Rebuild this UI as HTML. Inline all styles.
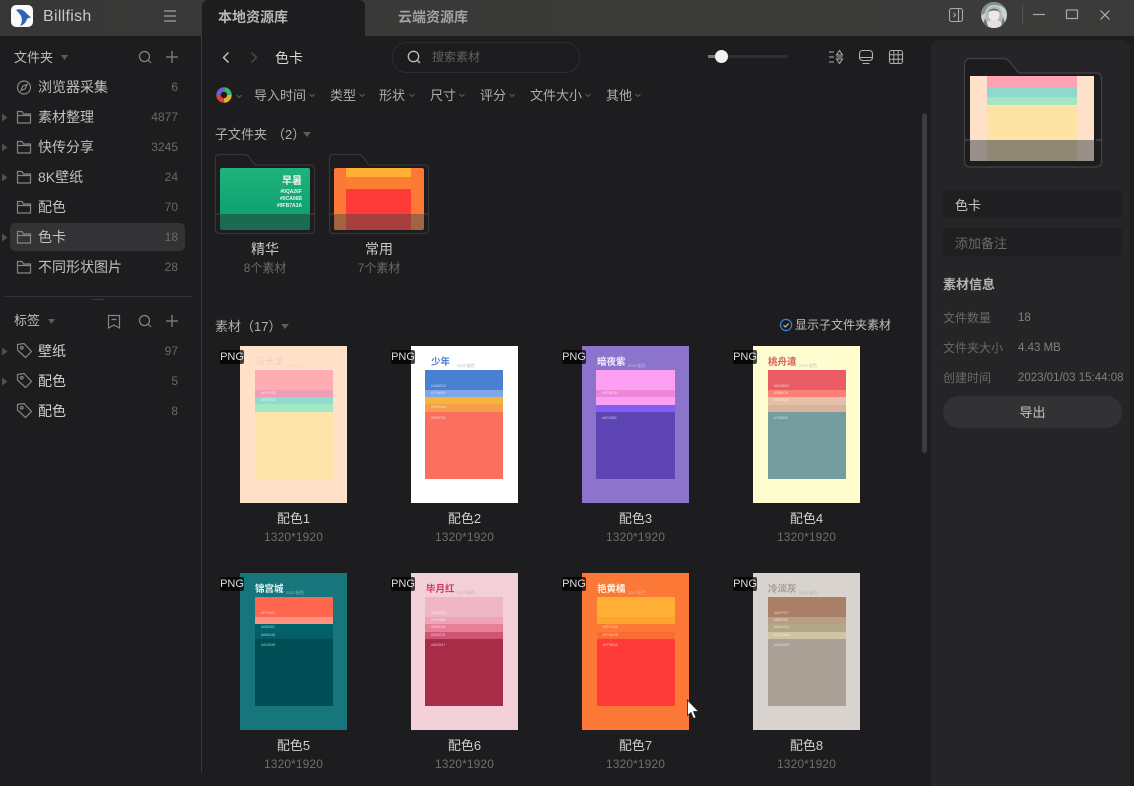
<!DOCTYPE html>
<html lang="zh"><head><meta charset="utf-8"><title>Billfish</title>
<style>
html,body{margin:0;padding:0;background:#1d1c1f}
#a{position:relative;width:1134px;height:786px;overflow:hidden;background:#1d1c1f;font-family:"Liberation Sans","Noto Sans CJK SC",sans-serif;color:#ccc}
#a div,#a svg,#a span{position:absolute}
.t{white-space:nowrap;line-height:20px;height:20px}
.n{font-size:14px;color:#c0c0c0;left:38px}
.k{font-size:12px;color:#6a6a6a;right:956px;text-align:right}
.f{font-size:13px;color:#aeaeae;top:86px}
.ic{fill:none;stroke:#858585;stroke-width:1.2}
.c{width:107px;height:157px;overflow:hidden}
.i{left:15px;top:24px;width:78px;height:109px}
.i div{left:0;width:100%;overflow:hidden}
.h{left:15px;top:10px;font-size:9.5px;font-weight:bold;line-height:14px;white-space:nowrap}
.m{left:46px;top:17px;font-size:4px;line-height:6px;white-space:nowrap;opacity:.6}
.x{font-size:3.5px;line-height:4px;color:#fff;left:6px;white-space:nowrap;opacity:.65}
.l{width:107px;text-align:center;font-size:13px;color:#d0d0d0;line-height:20px;margin-top:1px}
.d{width:107px;text-align:center;font-size:12px;color:#6e6e6e;line-height:18px;letter-spacing:.1px}
.b{width:24px;height:14px;margin-left:1px;background:rgba(0,0,0,.72);color:#ddd;font-size:11px;line-height:14px;text-align:center;border-radius:2px}
</style></head><body><div id="a">

<!-- title bar -->
<div style="left:0;top:0;width:1134px;height:36px;background:linear-gradient(90deg,#373737,#3a3a39 60%,#3b3c3a)"></div>
<div style="left:11px;top:5px;width:22px;height:22px;background:#fafafa;border-radius:5px"></div>
<svg style="left:11px;top:5px" width="22" height="22" viewBox="0 0 22 22"><path d="M5 5C9 3 13 5 16 9C17 10 19 11 20 13C18 12.500 17 13 16 14C15 17 13 20 9 21C11 18 11.500 14 10 11C9 9 7 7 5 5Z" fill="#2f63b8"/></svg>
<div class="t" style="left:43px;top:7px;font-size:16px;color:#c8c8c8;letter-spacing:.3px">Billfish</div>
<svg style="left:163px;top:9px" width="14" height="14" viewBox="0 0 14 14"><path d="M1 2H13M1 7H13M1 12H13" stroke="#a0a0a0" stroke-width="1.3" fill="none"/></svg>
<div style="left:202px;top:0;width:163px;height:36px;background:#1d1c1f;border-radius:6px 6px 0 0"></div>
<div class="t" style="left:218px;top:7px;font-size:14px;font-weight:bold;color:#b6b6b6">本地资源库</div>
<div class="t" style="left:398px;top:7px;font-size:14px;font-weight:bold;color:#a2a2a2">云端资源库</div>
<svg style="left:948px;top:7px" width="16" height="16" viewBox="0 0 16 16"><rect x="1.500" y="1.500" width="13" height="13" rx="2" fill="none" stroke="#a8a8a8" stroke-width="1.100"/><path d="M10.500 1.500V14.500M5.500 6L7.500 8L5.500 10" fill="none" stroke="#a8a8a8" stroke-width="1.100"/></svg>
<svg style="left:981px;top:2px" width="26" height="26" viewBox="0 0 26 26"><defs><clipPath id="av"><circle cx="13" cy="13" r="13"/></clipPath></defs><g clip-path="url(#av)"><rect width="26" height="26" fill="#cfcfcf"/><path d="M0 0H26V9C22 4 18 3 13 3C8 3 5 6 4 11L0 14Z" fill="#7f8f92"/><path d="M5 12C5 6 10 4 14 4C19 4 21 8 21 13L24 26H2Z" fill="#aebcbe"/><ellipse cx="13" cy="13" rx="5.500" ry="6" fill="#efe7e2"/><path d="M7 10C9 6 16 5 19 10C16 8 10 8 7 10Z" fill="#5c6a6f"/><path d="M3 26C4 20 8 18 13 18C18 18 22 20 23 26Z" fill="#e4e0de"/><path d="M4 16L7 24L2 24ZM22 15L25 24L20 24Z" fill="#647478"/></g></svg>
<div style="left:1022px;top:5px;width:1px;height:20px;background:#555"></div>
<svg style="left:1032px;top:7px" width="14" height="14" viewBox="0 0 14 14"><path d="M1 7.500H13" stroke="#a8a8a8" stroke-width="1.200"/></svg>
<svg style="left:1065px;top:7px" width="14" height="14" viewBox="0 0 14 14"><rect x="1.500" y="3" width="11" height="8.500" fill="none" stroke="#a8a8a8" stroke-width="1.200"/></svg>
<svg style="left:1098px;top:8px" width="14" height="14" viewBox="0 0 14 14"><path d="M2.500 2.500L11.500 11.500M11.500 2.500L2.500 11.500" stroke="#b0b0b0" stroke-width="1.200"/></svg>

<!-- sidebar -->
<div class="t" style="left:14px;top:48px;font-size:13px;color:#bcbcbc">文件夹</div>
<svg style="left:60px;top:54px" width="9" height="7"><path d="M1 1H8L4.500 6Z" fill="#5e5e5e"/></svg>
<svg style="left:138px;top:50px" width="15" height="15" viewBox="0 0 15 15"><circle cx="6.500" cy="6.500" r="5" class="ic"/><path d="M10 10L13 13" class="ic"/></svg>
<svg style="left:165px;top:50px" width="14" height="14" viewBox="0 0 14 14"><path d="M7 1V13M1 7H13" stroke="#7a7a7a" stroke-width="1.400"/></svg>

<div style="left:10px;top:223px;width:175px;height:28px;background:#333235;border-radius:5px"></div>

<svg style="left:16px;top:80px" width="16" height="15" viewBox="0 0 16 15"><circle cx="8" cy="7.500" r="6.500" class="ic"/><path d="M11 4.500L9.200 8.800L5 10.500L6.800 6.200Z" class="ic" stroke-width="1"/></svg>
<div class="t n" style="top:77px">浏览器采集</div><div class="t k" style="top:77px">6</div>

<svg style="left:1px;top:113px" width="7" height="9"><path d="M1 0.500L6.500 4.500L1 8.500Z" fill="#4f4f4f"/></svg>
<svg style="left:16px;top:109px" width="16" height="16" viewBox="0 0 16 16"><path d="M1.500 14V2.500H6L7.500 5H14.500V14ZM1.500 6.500H14.500" class="ic"/></svg>
<div class="t n" style="top:107px">素材整理</div><div class="t k" style="top:107px">4877</div>

<svg style="left:1px;top:143px" width="7" height="9"><path d="M1 0.500L6.500 4.500L1 8.500Z" fill="#4f4f4f"/></svg>
<svg style="left:16px;top:139px" width="16" height="16" viewBox="0 0 16 16"><path d="M1.500 14V2.500H6L7.500 5H14.500V14ZM1.500 6.500H14.500" class="ic"/></svg>
<div class="t n" style="top:137px">快传分享</div><div class="t k" style="top:137px">3245</div>

<svg style="left:1px;top:173px" width="7" height="9"><path d="M1 0.500L6.500 4.500L1 8.500Z" fill="#4f4f4f"/></svg>
<svg style="left:16px;top:169px" width="16" height="16" viewBox="0 0 16 16"><path d="M1.500 14V2.500H6L7.500 5H14.500V14ZM1.500 6.500H14.500" class="ic"/></svg>
<div class="t n" style="top:167px">8K壁纸</div><div class="t k" style="top:167px">24</div>

<svg style="left:16px;top:199px" width="16" height="16" viewBox="0 0 16 16"><path d="M1.500 14V2.500H6L7.500 5H14.500V14ZM1.500 6.500H14.500" class="ic"/></svg>
<div class="t n" style="top:197px">配色</div><div class="t k" style="top:197px">70</div>

<svg style="left:1px;top:233px" width="7" height="9"><path d="M1 0.500L6.500 4.500L1 8.500Z" fill="#4f4f4f"/></svg>
<svg style="left:16px;top:229px" width="16" height="16" viewBox="0 0 16 16"><path d="M1.500 14V2.500H6L7.500 5H14.500V14ZM1.500 6.500H14.500" class="ic"/></svg>
<div class="t n" style="top:227px">色卡</div><div class="t k" style="top:227px">18</div>

<svg style="left:16px;top:259px" width="16" height="16" viewBox="0 0 16 16"><path d="M1.500 14V2.500H6L7.500 5H14.500V14ZM1.500 6.500H14.500" class="ic"/></svg>
<div class="t n" style="top:257px">不同形状图片</div><div class="t k" style="top:257px">28</div>

<div style="left:4px;top:296px;width:188px;height:1px;background:#343336"></div>
<div style="left:92px;top:299px;width:12px;height:1px;background:#3a393c"></div>

<div class="t" style="left:14px;top:311px;font-size:13px;color:#bcbcbc">标签</div>
<svg style="left:47px;top:318px" width="9" height="7"><path d="M1 1H8L4.500 6Z" fill="#5e5e5e"/></svg>
<svg style="left:107px;top:314px" width="14" height="15" viewBox="0 0 14 15"><path d="M1.500 1.500H12.500V14L7 11L1.500 14ZM4.500 5.500H9.500" class="ic"/></svg>
<svg style="left:138px;top:314px" width="15" height="15" viewBox="0 0 15 15"><circle cx="6.500" cy="6.500" r="5" class="ic"/><path d="M10 10L13 13" class="ic"/></svg>
<svg style="left:165px;top:314px" width="14" height="14" viewBox="0 0 14 14"><path d="M7 1V13M1 7H13" stroke="#7a7a7a" stroke-width="1.400"/></svg>

<svg style="left:1px;top:347px" width="7" height="9"><path d="M1 0.500L6.500 4.500L1 8.500Z" fill="#4f4f4f"/></svg>
<svg style="left:16px;top:342px" width="17" height="17" viewBox="0 0 17 17"><path d="M1.500 2.500L8 1.500L15.500 9.500L9.500 15.500L1.500 8Z" class="ic"/><circle cx="5.800" cy="5.800" r="1.300" class="ic"/></svg>
<div class="t n" style="top:341px;color:#d0d0d0">壁纸</div><div class="t k" style="top:341px">97</div>

<svg style="left:1px;top:377px" width="7" height="9"><path d="M1 0.500L6.500 4.500L1 8.500Z" fill="#4f4f4f"/></svg>
<svg style="left:16px;top:372px" width="17" height="17" viewBox="0 0 17 17"><path d="M1.500 2.500L8 1.500L15.500 9.500L9.500 15.500L1.500 8Z" class="ic"/><circle cx="5.800" cy="5.800" r="1.300" class="ic"/></svg>
<div class="t n" style="top:371px;color:#d0d0d0">配色</div><div class="t k" style="top:371px">5</div>

<svg style="left:16px;top:402px" width="17" height="17" viewBox="0 0 17 17"><path d="M1.500 2.500L8 1.500L15.500 9.500L9.500 15.500L1.500 8Z" class="ic"/><circle cx="5.800" cy="5.800" r="1.300" class="ic"/></svg>
<div class="t n" style="top:401px;color:#d0d0d0">配色</div><div class="t k" style="top:401px">8</div>

<div style="left:201px;top:36px;width:1px;height:736px;background:#39383b"></div>

<!-- toolbar -->
<svg style="left:221px;top:51px" width="10" height="13" viewBox="0 0 10 13"><path d="M7.500 1.500L2.500 6.500L7.500 11.500" fill="none" stroke="#c8c8c8" stroke-width="1.400"/></svg>
<svg style="left:249px;top:51px" width="10" height="13" viewBox="0 0 10 13"><path d="M2.500 1.500L7.500 6.500L2.500 11.500" fill="none" stroke="#4c4c4c" stroke-width="1.400"/></svg>
<div class="t" style="left:275px;top:48px;font-size:14px;color:#d8d8d8">色卡</div>
<div style="left:392px;top:42px;width:186px;height:29px;border:1px solid #2d2c2f;border-radius:15px;background:#1c1b1e"></div>
<svg style="left:406px;top:49px" width="16" height="16" viewBox="0 0 16 16"><circle cx="7.500" cy="7.500" r="5.200" fill="none" stroke="#bdbdbd" stroke-width="1.300"/><path d="M11 11L14 14" stroke="#bdbdbd" stroke-width="1.300"/></svg>
<div class="t" style="left:432px;top:47px;font-size:12px;color:#636363">搜索素材</div>
<div style="left:708px;top:55px;width:80px;height:3px;background:#2f2e31;border-radius:2px"></div>
<div style="left:708px;top:55px;width:12px;height:3px;background:#777"></div>
<div style="left:715px;top:50px;width:13px;height:13px;background:#f1f1f1;border-radius:50%"></div>
<svg style="left:828px;top:49px" width="16" height="16" viewBox="0 0 16 16"><path d="M1 3H6M1 8H6M1 13H6M8.500 6L11.500 1.500L14.500 6ZM8.500 10L11.500 14.500L14.500 10ZM8.500 8H14.500" fill="none" stroke="#b0b0b0" stroke-width="1"/></svg>
<svg style="left:858px;top:49px" width="16" height="16" viewBox="0 0 16 16"><rect x="1.500" y="1.500" width="13" height="10" rx="3" fill="none" stroke="#b0b0b0" stroke-width="1.100"/><path d="M1.500 8.500H14.500M4.500 14.500H11.500" stroke="#b0b0b0" stroke-width="1.100"/></svg>
<svg style="left:888px;top:49px" width="16" height="16" viewBox="0 0 16 16"><rect x="1.500" y="1.500" width="13" height="13" rx="2" fill="none" stroke="#b0b0b0" stroke-width="1.100"/><path d="M5.800 1.500V14.500M10.200 1.500V14.500M1.500 5.800H14.500M1.500 10.200H14.500" stroke="#b0b0b0" stroke-width="1"/></svg>

<!-- filters -->
<svg style="left:215px;top:86px" width="18" height="18" viewBox="0 0 18 18" fill="none" stroke-width="4.500"><circle cx="9" cy="9" r="5.500" stroke="#3fb56c" stroke-dasharray="8.600 26" stroke-dashoffset="-26"/><circle cx="9" cy="9" r="5.500" stroke="#e8b02e" stroke-dasharray="8.600 26" stroke-dashoffset="0"/><circle cx="9" cy="9" r="5.500" stroke="#e0413c" stroke-dasharray="8.600 26" stroke-dashoffset="-8.600"/><circle cx="9" cy="9" r="5.500" stroke="#7a5bd0" stroke-dasharray="8.700 26" stroke-dashoffset="-17.300"/></svg>
<svg style="left:235px;top:94px" width="8" height="6"><path d="M1.500 1L4 3.500L6.500 1" fill="none" stroke="#5a5a5a" stroke-width="1.100"/></svg>
<div class="t f" style="left:254px">导入时间</div><svg style="left:308px;top:93px" width="8" height="6"><path d="M1.500 1L4 3.500L6.500 1" fill="none" stroke="#5a5a5a" stroke-width="1.100"/></svg>
<div class="t f" style="left:330px">类型</div><svg style="left:358px;top:93px" width="8" height="6"><path d="M1.500 1L4 3.500L6.500 1" fill="none" stroke="#5a5a5a" stroke-width="1.100"/></svg>
<div class="t f" style="left:379px">形状</div><svg style="left:408px;top:93px" width="8" height="6"><path d="M1.500 1L4 3.500L6.500 1" fill="none" stroke="#5a5a5a" stroke-width="1.100"/></svg>
<div class="t f" style="left:430px">尺寸</div><svg style="left:458px;top:93px" width="8" height="6"><path d="M1.500 1L4 3.500L6.500 1" fill="none" stroke="#5a5a5a" stroke-width="1.100"/></svg>
<div class="t f" style="left:480px">评分</div><svg style="left:508px;top:93px" width="8" height="6"><path d="M1.500 1L4 3.500L6.500 1" fill="none" stroke="#5a5a5a" stroke-width="1.100"/></svg>
<div class="t f" style="left:530px">文件大小</div><svg style="left:584px;top:93px" width="8" height="6"><path d="M1.500 1L4 3.500L6.500 1" fill="none" stroke="#5a5a5a" stroke-width="1.100"/></svg>
<div class="t f" style="left:606px">其他</div><svg style="left:634px;top:93px" width="8" height="6"><path d="M1.500 1L4 3.500L6.500 1" fill="none" stroke="#5a5a5a" stroke-width="1.100"/></svg>

<!-- subfolders -->
<div class="t" style="left:215px;top:125px;font-size:13px;color:#b0b0b0">子文件夹</div>
<div class="t" style="left:272px;top:125px;font-size:13px;color:#b0b0b0">（2）</div>
<svg style="left:302px;top:131px" width="10" height="7"><path d="M1 1H9L5 6Z" fill="#5e5e5e"/></svg>

<div style="left:220px;top:168px;width:90px;height:46px;background:linear-gradient(180deg,#1fb27c,#0fa270);border-radius:2px 2px 0 0"></div>
<div style="left:220px;top:214px;width:90px;height:16px;background:#1c6a52;border-radius:0 0 2px 2px"></div>
<div class="t" style="left:282px;top:172px;width:20px;text-align:right;font-size:10px;font-weight:bold;color:#f2f2f2">早暑</div>
<div class="t" style="left:272px;top:182px;width:30px;text-align:right;font-size:5px;font-weight:bold;color:#e8f5ee">#0QA26F</div>
<div class="t" style="left:272px;top:189px;width:30px;text-align:right;font-size:5px;font-weight:bold;color:#e8f5ee">#0CA06B</div>
<div class="t" style="left:272px;top:196px;width:30px;text-align:right;font-size:5px;font-weight:bold;color:#e8f5ee">#9FB7A3A</div>
<svg style="left:214px;top:153px" width="102" height="82" viewBox="0 0 102 82"><path d="M1.500 77V5.500Q1.500 1.500 5.500 1.500H30Q33 1.500 35 4L41 12H96Q100.500 12 100.500 16V77Q100.500 80.500 96 80.500H6Q1.500 80.500 1.500 77Z" fill="none" stroke="#363538" stroke-width="1.200"/><path d="M1.500 61H6M96 61H100.500" stroke="#444" stroke-width="1"/></svg>
<div class="t" style="left:215px;top:239px;width:100px;text-align:center;font-size:14px;color:#c8c8c8">精华</div>
<div class="t" style="left:215px;top:258px;width:100px;text-align:center;font-size:12px;color:#6a6a6a">8个素材</div>

<div style="left:334px;top:168px;width:90px;height:46px;background:#fb7836;border-radius:2px 2px 0 0"></div>
<div style="left:346px;top:168px;width:65px;height:9px;background:#ffb035"></div>
<div style="left:346px;top:177px;width:65px;height:12px;background:#fc7e33"></div>
<div style="left:346px;top:189px;width:65px;height:25px;background:#ff3b3a"></div>
<div style="left:334px;top:214px;width:90px;height:16px;background:#a0643f;border-radius:0 0 2px 2px"></div>
<div style="left:346px;top:214px;width:65px;height:16px;background:#a83f3f"></div>
<svg style="left:328px;top:153px" width="102" height="82" viewBox="0 0 102 82"><path d="M1.500 77V5.500Q1.500 1.500 5.500 1.500H30Q33 1.500 35 4L41 12H96Q100.500 12 100.500 16V77Q100.500 80.500 96 80.500H6Q1.500 80.500 1.500 77Z" fill="none" stroke="#363538" stroke-width="1.200"/><path d="M1.500 61H6M96 61H100.500" stroke="#444" stroke-width="1"/></svg>
<div class="t" style="left:329px;top:239px;width:100px;text-align:center;font-size:14px;color:#c8c8c8">常用</div>
<div class="t" style="left:329px;top:258px;width:100px;text-align:center;font-size:12px;color:#6a6a6a">7个素材</div>

<!-- assets header -->
<div class="t" style="left:215px;top:317px;font-size:13px;color:#b0b0b0">素材（17）</div>
<svg style="left:280px;top:323px" width="10" height="7"><path d="M1 1H9L5 6Z" fill="#5e5e5e"/></svg>
<svg style="left:779px;top:318px" width="14" height="14" viewBox="0 0 14 14"><circle cx="7" cy="7" r="5.600" fill="none" stroke="#3d7fd0" stroke-width="1.200"/><path d="M4.500 7.200L6.400 9L9.600 5.500" fill="none" stroke="#bcd0ea" stroke-width="1.100"/></svg>
<div class="t" style="left:795px;top:315px;font-size:12px;color:#c0c0c0">显示子文件夹素材</div>

<!-- card 1 -->
<div class="c" style="left:240px;top:346px;background:#ffe0c8"><div class="h" style="color:#f4cdbb;font-weight:normal">马卡龙</div><div class="m" style="color:#f2c6b4">2023 配色</div>
<div class="i"><div style="top:0;height:20px;background:#ffadb3"></div><div style="top:20px;height:7px;background:#ef9fb5"><span class="x" style="top:1px">#EF9FB5</span></div><div style="top:27px;height:7px;background:#8fdbd0"><span class="x" style="top:1px">#8FDBD0</span></div><div style="top:34px;height:8px;background:#a2e8c2"></div><div style="top:42px;height:67px;background:#fde4ab"></div></div></div>
<div class="b" style="left:219px;top:350px">PNG</div>
<div class="l" style="left:240px;top:508px">配色1</div><div class="d" style="left:240px;top:528px">1320*1920</div>

<!-- card 2 -->
<div class="c" style="left:411px;top:346px;background:#fff"><div class="h" style="color:#4a80d0;left:20px">少年</div><div class="m" style="color:#888">2023 配色</div>
<div class="i" style="left:14px"><div style="top:0;height:20px;background:#4a80d4"><span class="x" style="top:14px">#4A80D4</span></div><div style="top:20px;height:7px;background:#7fa6e6"><span class="x" style="top:1px">#7FA6E6</span></div><div style="top:27px;height:7px;background:#f5b53a"></div><div style="top:34px;height:8px;background:#f59d4a"><span class="x" style="top:1px">#F59D4A</span></div><div style="top:42px;height:67px;background:#fb6f5e"><span class="x" style="top:4px">#FB6F5E</span></div></div></div>
<div class="b" style="left:390px;top:350px">PNG</div>
<div class="l" style="left:411px;top:508px">配色2</div><div class="d" style="left:411px;top:528px">1320*1920</div>

<!-- card 3 -->
<div class="c" style="left:582px;top:346px;background:#8c74cc"><div class="h" style="color:#f3ecff">暗夜紫</div><div class="m" style="color:#e8defa">2023 配色</div>
<div class="i" style="left:14px;width:79px"><div style="top:0;height:20px;background:#fda0f3"></div><div style="top:20px;height:7px;background:#ee86d8"><span class="x" style="top:1px">#EE86D8</span></div><div style="top:27px;height:8px;background:#fda0f3"></div><div style="top:35px;height:7px;background:#8060f0"></div><div style="top:42px;height:67px;background:#5c45b2"><span class="x" style="top:4px">#5C45B2</span></div></div></div>
<div class="b" style="left:561px;top:350px">PNG</div>
<div class="l" style="left:582px;top:508px">配色3</div><div class="d" style="left:582px;top:528px">1320*1920</div>

<!-- card 4 -->
<div class="c" style="left:753px;top:346px;background:#fdfdcf"><div class="h" style="color:#d9605f">桃舟遣</div><div class="m" style="color:#999">2023 配色</div>
<div class="i"><div style="top:0;height:20px;background:#ea5b63"><span class="x" style="top:14px">#EA5B63</span></div><div style="top:20px;height:7px;background:#fb8076"><span class="x" style="top:1px">#FB8076</span></div><div style="top:27px;height:8px;background:#e5bfa8"><span class="x" style="top:1px">#E5BFA8</span></div><div style="top:35px;height:7px;background:#d8b49d"></div><div style="top:42px;height:67px;background:#759d9f"><span class="x" style="top:4px">#759D9F</span></div></div></div>
<div class="b" style="left:732px;top:350px">PNG</div>
<div class="l" style="left:753px;top:508px">配色4</div><div class="d" style="left:753px;top:528px">1320*1920</div>

<!-- card 5 -->
<div class="c" style="left:240px;top:573px;background:#16767c"><div class="h" style="color:#e8f4f2">锦宫城</div><div class="m" style="color:#cfe6e4">2023 配色</div>
<div class="i"><div style="top:0;height:20px;background:#ff6650"><span class="x" style="top:14px">#FF6650</span></div><div style="top:20px;height:7px;background:#ff917e"></div><div style="top:27px;height:8px;background:#00636c"><span class="x" style="top:1px">#00636C</span></div><div style="top:35px;height:7px;background:#055c65"><span class="x" style="top:1px">#055C65</span></div><div style="top:42px;height:67px;background:#004e55"><span class="x" style="top:4px">#004E55</span></div></div></div>
<div class="b" style="left:219px;top:577px">PNG</div>
<div class="l" style="left:240px;top:735px">配色5</div><div class="d" style="left:240px;top:755px">1320*1920</div>

<!-- card 6 -->
<div class="c" style="left:411px;top:573px;background:#f3d0d8"><div class="h" style="color:#cf3a62">毕月红</div><div class="m" style="color:#a88">2023 配色</div>
<div class="i" style="left:14px"><div style="top:0;height:20px;background:#eeb6c6"><span class="x" style="top:14px">#EEB6C6</span></div><div style="top:20px;height:7px;background:#f0a3b6"><span class="x" style="top:1px">#F0A3B6</span></div><div style="top:27px;height:8px;background:#e58098"><span class="x" style="top:1px">#E58098</span></div><div style="top:35px;height:7px;background:#d05575"><span class="x" style="top:1px">#D05575</span></div><div style="top:42px;height:67px;background:#a82b47"><span class="x" style="top:4px">#A82B47</span></div></div></div>
<div class="b" style="left:390px;top:577px">PNG</div>
<div class="l" style="left:411px;top:735px">配色6</div><div class="d" style="left:411px;top:755px">1320*1920</div>

<!-- card 7 -->
<div class="c" style="left:582px;top:573px;background:#fb7836"><div class="h" style="color:#fff0e0">艳黄橘</div><div class="m" style="color:#fcd2b0">2023 配色</div>
<div class="i"><div style="top:0;height:20px;background:#ffb035"></div><div style="top:20px;height:7px;background:#fba52f"></div><div style="top:27px;height:8px;background:#fd7a36"><span class="x" style="top:1px">#FD7A36</span></div><div style="top:35px;height:7px;background:#fc6a38"><span class="x" style="top:1px">#FC6A38</span></div><div style="top:42px;height:67px;background:#ff3b3a;border-radius:2px"><span class="x" style="top:4px">#FF3B3A</span></div></div></div>
<div class="b" style="left:561px;top:577px">PNG</div>
<div class="l" style="left:582px;top:735px">配色7</div><div class="d" style="left:582px;top:755px">1320*1920</div>

<!-- card 8 -->
<div class="c" style="left:753px;top:573px;background:#d8d3ce"><div class="h" style="color:#a39b92">冷淡灰</div><div class="m" style="color:#999">2023 配色</div>
<div class="i"><div style="top:0;height:20px;background:#a97f67"><span class="x" style="top:14px">#A97F67</span></div><div style="top:20px;height:7px;background:#b89f85"><span class="x" style="top:1px">#B89F85</span></div><div style="top:27px;height:8px;background:#b3a78a"><span class="x" style="top:1px">#B3A78A</span></div><div style="top:35px;height:7px;background:#cfc5a2"><span class="x" style="top:1px">#CFC5A2</span></div><div style="top:42px;height:67px;background:#aaa095"><span class="x" style="top:4px">#AAA095</span></div></div></div>
<div class="b" style="left:732px;top:577px">PNG</div>
<div class="l" style="left:753px;top:735px">配色8</div><div class="d" style="left:753px;top:755px">1320*1920</div>

<!-- cursor -->
<svg style="left:686px;top:699px" width="14" height="22" viewBox="0 0 14 22"><path d="M1.500 1V16.500L5 13.500L7.500 19.500L10 18.500L7.500 12.500H12.500Z" fill="#fff" stroke="#222" stroke-width=".8"/></svg>

<!-- scrollbar -->
<div style="left:922px;top:113px;width:5px;height:340px;background:#3c3b3e;border-radius:3px"></div>

<!-- right panel -->
<div style="left:931px;top:40px;width:199px;height:746px;background:#252427;border-radius:8px 8px 0 0"></div>
<svg style="left:963px;top:57px" width="140" height="112" viewBox="0 0 140 112"><path d="M1.500 104V8Q1.500 1.500 8 1.500H40Q44 1.500 47 5L56 16H133Q138.500 16 138.500 22V104Q138.500 110 132 110H8Q1.500 110 1.500 104Z" fill="#1d1c1f" stroke="#434245" stroke-width="1.200"/><path d="M1.500 83H7M133 83H138.500" stroke="#555" stroke-width="1"/></svg>
<div style="left:970px;top:76px;width:124px;height:64px;background:#ffe0c8"></div>
<div style="left:987px;top:76px;width:90px;height:12px;background:#ffa2b4"></div>
<div style="left:987px;top:88px;width:90px;height:9px;background:#8fd8d0"></div>
<div style="left:987px;top:97px;width:90px;height:8px;background:#a5e6c0;border-radius:0 0 2px 2px"></div>
<div style="left:987px;top:106px;width:90px;height:34px;background:#fde3a5"></div>
<div style="left:970px;top:140px;width:124px;height:21px;background:#978f88"></div>
<div style="left:987px;top:140px;width:90px;height:21px;background:#8f8674"></div>
<div style="left:943px;top:190px;width:179px;height:28px;background:#1f1e21;border-radius:4px"></div>
<div class="t" style="left:955px;top:196px;font-size:13px;color:#cacaca">色卡</div>
<div style="left:943px;top:228px;width:179px;height:28px;background:#1f1e21;border-radius:4px"></div>
<div class="t" style="left:955px;top:234px;font-size:13px;color:#6a6a6a">添加备注</div>
<div class="t" style="left:943px;top:275px;font-size:13px;font-weight:bold;color:#b6b6b6">素材信息</div>
<div class="t" style="left:943px;top:308px;font-size:12px;color:#6a6a6a">文件数量</div>
<div class="t" style="left:1018px;top:308px;font-size:11.500px;color:#808080">18</div>
<div class="t" style="left:943px;top:338px;font-size:12px;color:#6a6a6a">文件夹大小</div>
<div class="t" style="left:1018px;top:338px;font-size:11.500px;color:#808080">4.43 MB</div>
<div class="t" style="left:943px;top:368px;font-size:12px;color:#6a6a6a">创建时间</div>
<div class="t" style="left:1018px;top:368px;font-size:11.500px;color:#808080">2023/01/03 15:44:08</div>
<div style="left:943px;top:396px;width:179px;height:32px;background:#323134;border-radius:16px"></div>
<div class="t" style="left:943px;top:403px;width:179px;text-align:center;font-size:13px;color:#c4c4c4">导出</div>

</div></body></html>
